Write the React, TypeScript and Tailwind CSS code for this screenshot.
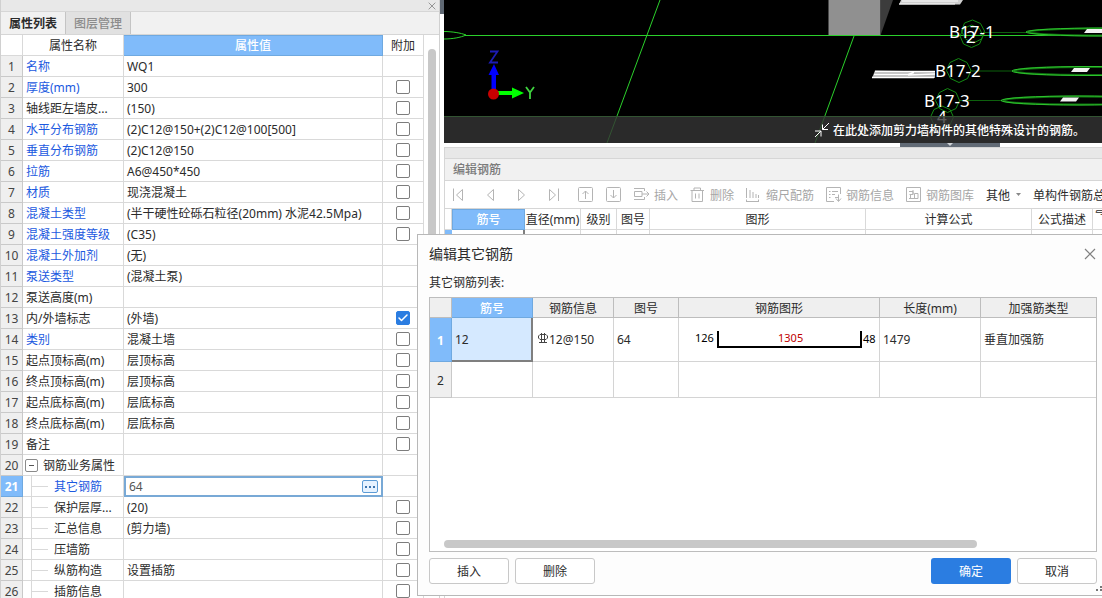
import { useState } from "react";
import type { ReactNode } from "react";
import { Check } from "lucide-react";

type PropertyRow = {
  id: number;
  name: string;
  value: string;
  common?: boolean;
  extra?: boolean;
  kind?: "group" | "child";
};

const rows: PropertyRow[] = [
  { id: 1, name: "名称", value: "WQ1", common: true },
  { id: 2, name: "厚度(mm)", value: "300", common: true, extra: false },
  { id: 3, name: "轴线距左墙皮...", value: "(150)", extra: false },
  { id: 4, name: "水平分布钢筋", value: "(2)C12@150+(2)C12@100[500]", common: true, extra: false },
  { id: 5, name: "垂直分布钢筋", value: "(2)C12@150", common: true, extra: false },
  { id: 6, name: "拉筋", value: "A6@450*450", common: true, extra: false },
  { id: 7, name: "材质", value: "现浇混凝土", common: true, extra: false },
  { id: 8, name: "混凝土类型", value: "(半干硬性砼砾石粒径(20mm) 水泥42.5Mpa)", common: true, extra: false },
  { id: 9, name: "混凝土强度等级", value: "(C35)", common: true, extra: false },
  { id: 10, name: "混凝土外加剂", value: "(无)", common: true },
  { id: 11, name: "泵送类型", value: "(混凝土泵)", common: true },
  { id: 12, name: "泵送高度(m)", value: "" },
  { id: 13, name: "内/外墙标志", value: "(外墙)", extra: true },
  { id: 14, name: "类别", value: "混凝土墙", common: true, extra: false },
  { id: 15, name: "起点顶标高(m)", value: "层顶标高", extra: false },
  { id: 16, name: "终点顶标高(m)", value: "层顶标高", extra: false },
  { id: 17, name: "起点底标高(m)", value: "层底标高", extra: false },
  { id: 18, name: "终点底标高(m)", value: "层底标高", extra: false },
  { id: 19, name: "备注", value: "", extra: false },
  { id: 20, name: "钢筋业务属性", value: "", kind: "group" },
  { id: 21, name: "其它钢筋", value: "64", common: true, kind: "child" },
  { id: 22, name: "保护层厚...", value: "(20)", extra: false, kind: "child" },
  { id: 23, name: "汇总信息", value: "(剪力墙)", extra: false, kind: "child" },
  { id: 24, name: "压墙筋", value: "", extra: false, kind: "child" },
  { id: 25, name: "纵筋构造", value: "设置插筋", extra: false, kind: "child" },
  { id: 26, name: "插筋信息", value: "", extra: false, kind: "child" },
];

const ACTIVE_ROW = 21;

function CloseIcon({ size }: { size: number }) {
  return (
    <svg width={size} height={size} viewBox="0 0 12 12" fill="none" stroke="#808080">
      <path d="M1 1L11 11M11 1L1 11" strokeWidth="1.2" />
    </svg>
  );
}

function ExtraCheckbox({ label, initial }: { label: string; initial: boolean }) {
  const [checked, setChecked] = useState(initial);

  return (
    <span className="relative flex items-center justify-center">
      <input
        type="checkbox"
        aria-label={label}
        checked={checked}
        onChange={(e) => setChecked(e.target.checked)}
        className="h-3.5 w-3.5 appearance-none rounded-xs border border-[#7d7d7d] bg-white checked:border-[#2b7de1] checked:bg-[#2b7de1]"
      />
      {checked && (
        <Check
          size={12}
          strokeWidth={3}
          className="pointer-events-none absolute text-white"
        />
      )}
    </span>
  );
}

function NameCell({ row }: { row: PropertyRow }) {
  if (row.kind === "group") {
    return (
      <div className="flex h-5 items-center gap-[5px] pl-0.5">
        <button
          type="button"
          aria-label="折叠"
          className="flex h-[13px] w-[13px] items-center justify-center rounded-xs border border-[#8a8a8a]"
        >
          <span className="h-px w-[5px] bg-[#555]" />
        </button>
        <span className="pt-0.5">{row.name}</span>
      </div>
    );
  }
  if (row.kind === "child") {
    return (
      <div className="flex h-5 items-center pl-2">
        <span className="flex h-5 w-[17px] items-center border-l border-[#d9d9d9]">
          <span className="h-px w-4 bg-[#d9d9d9]" />
        </span>
        <span className="pt-0.5 pl-1.5">{row.name}</span>
      </div>
    );
  }
  return <div className="pt-0.5 pl-[3px]">{row.name}</div>;
}

function PropertyPanel() {
  const [other, setOther] = useState("64");

  return (
    <aside className="flex w-[440px] shrink-0 flex-col border-x border-[#d0d0d0] bg-white">
      <div className="flex h-3 shrink-0 items-center justify-end border-b border-[#d6d6d6] bg-[#e8e8e8] pr-[3px]">
        <button type="button" aria-label="关闭">
          <CloseIcon size={8} />
        </button>
      </div>
      <div className="flex h-[23px] shrink-0 border-b border-[#d6d6d6] bg-[#f1f1f1]">
        <button type="button" className="w-[65px] border-r border-[#c4c4c4] pt-0.5 font-semibold">
          属性列表
        </button>
        <button
          type="button"
          className="w-[65px] border-r border-[#c4c4c4] bg-[#e1e1e1] pt-0.5 font-medium text-[#8c8c8c]"
        >
          图层管理
        </button>
      </div>
      <div className="flex min-h-0 flex-1 overflow-hidden">
        <table className="w-[423px] shrink-0 table-fixed border-separate border-spacing-0 self-start">
          <colgroup>
            <col className="w-[22px]" />
            <col className="w-[101px]" />
            <col className="w-[259px]" />
            <col className="w-[41px]" />
          </colgroup>
          <thead>
            <tr className="h-[21px]">
              <th className="border-r border-b border-[#d9d9d9] p-0" />
              <th className="border-r border-b border-[#d9d9d9] p-0 pt-0.5 font-normal">属性名称</th>
              <th className="border border-l-0 border-[#6fa9e0] bg-[#80bbfa] p-0 pt-px font-medium text-white">
                属性值
              </th>
              <th className="border-r border-b border-[#d9d9d9] p-0 pt-0.5 font-normal">附加</th>
            </tr>
          </thead>
          <tbody>
            {rows.map((row) => {
              const active = row.id === ACTIVE_ROW;
              return (
                <tr key={row.id} className="h-[21px]">
                  <td
                    className={
                      active
                        ? "border-r border-b border-[#6fa9e0] bg-[#80bbfa] p-0 pt-0.5 text-center font-bold text-white"
                        : "border-r border-b border-[#c9c9c9] bg-[#efefef] p-0 pt-0.5 text-center text-[#444]"
                    }
                  >
                    {row.id}
                  </td>
                  <td
                    className={`border-r border-b border-[#d9d9d9] p-0 whitespace-nowrap ${
                      row.common ? "text-[#1b59e0]" : ""
                    }`}
                  >
                    <NameCell row={row} />
                  </td>
                  {active ? (
                    <td className="border-2 border-[#78a9d6] p-0">
                      <div className="flex items-center pr-[3px] pl-[3px]">
                        <input
                          aria-label={row.name}
                          value={other}
                          onChange={(e) => setOther(e.target.value)}
                          className="h-4 min-w-0 flex-1 text-[#555] outline-none"
                        />
                        <button
                          type="button"
                          aria-label="更多"
                          className="flex h-[13px] w-4 items-center justify-center gap-0.5 rounded-xs border border-[#5b9bd5] bg-[#e6f2ff]"
                        >
                          <span className="h-0.5 w-0.5 bg-[#3d74ad]" />
                          <span className="h-0.5 w-0.5 bg-[#3d74ad]" />
                          <span className="h-0.5 w-0.5 bg-[#3d74ad]" />
                        </button>
                      </div>
                    </td>
                  ) : (
                    <td className="border-r border-b border-[#d9d9d9] p-0 pt-0.5 pl-[3px] whitespace-nowrap">
                      {row.value}
                    </td>
                  )}
                  <td className="border-r border-b border-[#d9d9d9] p-0">
                    {row.extra !== undefined && (
                      <ExtraCheckbox label={`附加 ${row.name}`} initial={row.extra} />
                    )}
                  </td>
                </tr>
              );
            })}
          </tbody>
        </table>
        <div className="mt-3.5 mb-1 ml-1 w-2 rounded-full bg-[#c8c8c8]" />
      </div>
    </aside>
  );
}

function ModelView() {
  return (
    <div className="relative h-[143px] shrink-0 overflow-hidden bg-black">
      <svg width="658" height="143" viewBox="444 0 658 143" fill="none" className="block max-w-none">
        <g stroke="#2bd02b">
          <path d="M444 31.5c8 0 17 1.500 22 3.500c-5 2.500-14 4-22 4" />
          <path d="M465 35.500H1102" />
          <path d="M660 0L607 143" />
          <path d="M444 116.500H1102" />
          <path d="M854 36L815 143" />
        </g>

        <path d="M491.500 89V75H488.500L494 64L499 75H496V89z" fill="#0000ff" />
        <path d="M498 91H512V87.500L524 93L512 98.500V95H498z" fill="#00ff00" />
        <circle cx="493.500" cy="94" r="5.500" fill="#c80000" />
        <path d="M490 51.500H497.500L490 62.500H498" stroke="#1c1cb4" strokeWidth="1.800" />
        <path d="M526 87L530 92.500V99M534 87L530 92.500" stroke="#3fd43f" strokeWidth="1.800" />

        <path d="M828.500 0H880.500V35H828.500z" fill="#909090" />
        <path d="M881 0H893L881 34z" fill="#3c3c3c" />
        <path d="M901 0H963L960 4.500H899z" fill="#cfcfcf" />
        <path d="M902 1H958M899 4H955" stroke="#fff" />

        <path d="M875 70.500L935 71.500V78H872z" fill="#b4b4b4" />
        <path d="M875 71.500H935M874 74.500H908L914 72.500M908 75L935 74M872 77.500H934" stroke="#fff" strokeWidth="1.500" />

        <g stroke="#138a13">
          <path d="M983 32.500H1028M970 71H1013M959 100.500H1002" strokeOpacity=".7" />
          <path d="M972.500 20l8 3.500 4 7.500-3 8-8 4-8-4-4-8 3-8z" />
          <path d="M971.500 25l8 3.500 3.500 7.500-3.500 8-8 3.500-8-3.500-3.500-8 3.500-7.500z" />
          <path d="M958.500 58.500l8.500 4 4 8-3.500 8-8.500 4-8.500-4-4-8 3.500-8z" />
          <path d="M947.500 88.500l8.500 4 3.500 8-3.500 8-8.500 4-8-4-4-8 4-8z" />
          <path d="M942 106l8 3.500 3.500 7.500-3.500 8-8 3.500-8-3.500-3.500-8 3.500-7.500z" />
        </g>
        <g fill="#000" stroke="#0f6e0f" strokeWidth="2">
          <ellipse cx="1104" cy="32" rx="76" ry="3.500" />
          <ellipse cx="1090" cy="71" rx="76" ry="4" />
          <ellipse cx="1079" cy="100.500" rx="76" ry="4" />
        </g>
        <g stroke="#2fc42f">
          <ellipse cx="1104" cy="32" rx="78" ry="4" />
          <ellipse cx="1090" cy="71" rx="78" ry="4.500" />
          <ellipse cx="1079" cy="100.500" rx="78" ry="4.500" />
        </g>
        <g fill="#f2f2f2">
          <path d="M1087 29H1102V33H1084z" />
          <path d="M1074 68H1090L1087 72H1071z" />
          <path d="M1063 97.500H1079L1076 101.500H1060z" />
        </g>
        <g fill="#fff" fontSize="17" fontFamily="'Noto Sans', sans-serif">
          <text x="949" y="38">B17-1</text>
          <text x="966" y="43">2</text>
          <text x="935" y="77">B17-2</text>
          <text x="924" y="107">B17-3</text>
          <text x="937" y="123">4</text>
        </g>
      </svg>
      <div className="absolute inset-x-0 bottom-0 flex h-[27px] items-center justify-end gap-[3px] bg-[#353535]/80 pt-0.5 pr-[17px] font-medium text-white">
        <svg width="16" height="16" viewBox="0 0 16 16" fill="none" stroke="#fff">
          <path d="M15 0L8.500 6.500M8.500 1.500V6.500H14M1 14L7 8M1 8H7V13.500" />
        </svg>
        在此处添加剪力墙构件的其他特殊设计的钢筋。
      </div>
    </div>
  );
}

function Icon({ children }: { children: ReactNode }) {
  return (
    <svg
      width="16"
      height="16"
      viewBox="0 0 16 16"
      fill="none"
      stroke="#b4b4b4"
      className="shrink-0"
    >
      {children}
    </svg>
  );
}

function ToolButton({ label, children }: { label: string; children: ReactNode }) {
  return (
    <button type="button" className="flex shrink-0 items-center gap-1 text-[#a6a6a6]">
      <Icon>{children}</Icon>
      <span className="pt-0.5">{label}</span>
    </button>
  );
}

function IconButton({ label, children }: { label: string; children: ReactNode }) {
  return (
    <button type="button" aria-label={label} className="shrink-0">
      <Icon>{children}</Icon>
    </button>
  );
}

function RebarToolbar() {
  return (
    <div className="flex h-7 shrink-0 items-center gap-3 overflow-hidden border-b border-[#d6d6d6] pl-[5px] whitespace-nowrap">
      <div className="flex gap-4">
        <IconButton label="首条">
          <path d="M3.500 1.500V14M12.500 2.500V13.500L6.500 8z" />
        </IconButton>
        <IconButton label="上一条">
          <path d="M11.500 2.500V13.500L5.500 8z" />
        </IconButton>
        <IconButton label="下一条">
          <path d="M4.500 2.500V13.500L10.500 8z" />
        </IconButton>
        <IconButton label="末条">
          <path d="M12.500 1.500V14M3.500 2.500V13.500L9.500 8z" />
        </IconButton>
        <IconButton label="上移">
          <rect x=".5" y=".5" width="14" height="14" rx="1" />
          <path d="M7.500 12V4M4.500 7L7.500 4L10.500 7" />
        </IconButton>
      </div>
      <IconButton label="下移">
        <rect x=".5" y=".5" width="14" height="14" rx="1" />
        <path d="M7.500 3V11M4.500 8L7.500 11L10.500 8" />
      </IconButton>
      <ToolButton label="插入">
        <path d="M0 1.500H10.500V4M0 12.500H10.500V10M.5 4.500H8V9.500H.5zM8 7H15M12.500 4.500L15 7L12.500 9.500" />
      </ToolButton>
      <ToolButton label="删除">
        <path d="M.5 3.500H14M4 3.500V1H10.500V3.500M2 3.500V14.500H12.500V3.500M5.500 6.500V11.500M9 6.500V11.500" />
      </ToolButton>
      <ToolButton label="缩尺配筋">
        <path d="M.5 1V11M4 3V11M7 5V11M10 7V11M12.500 8V11M0 14.500H13M.5 12.500V15M12.500 12.500V15" />
      </ToolButton>
      <ToolButton label="钢筋信息">
        <path d="M14.500 7V.5H.5V14.500H8M3 4.500H4.500M6 4.500H12M3 7.500H4.500M6 7.500H9M3 10.500H4.500M12.500 7.500V14M10 11.500L12.500 14.500L15 11.500M9 10.500H12" />
      </ToolButton>
      <ToolButton label="钢筋图库">
        <path d="M.5 .5H14.500V14.500H.5zM3 4.500H7V7.500H3.500M7 3V7.500M3 11.500H12V6.500H8.500V11.500M4.500 7.500V11.500" />
      </ToolButton>
      <button type="button" className="flex shrink-0 items-center gap-1.5">
        <span className="pt-0.5">其他</span>
        <svg width="5" height="3" viewBox="0 0 5 3">
          <path d="M0 0H5L2.500 3z" fill="#888" />
        </svg>
      </button>
      <button type="button" className="shrink-0 pt-0.5">
        单构件钢筋总重
      </button>
    </div>
  );
}

function RebarPanel() {
  const head = "border-r border-b border-[#d9d9d9] p-0 pt-0.5 font-normal whitespace-nowrap";

  return (
    <section className="flex min-h-0 flex-1 flex-col border-t border-l border-[#d6d6d6] bg-white">
      <div className="h-[11px] shrink-0 border-b border-[#d6d6d6] bg-[#e8e8e8]" />
      <h2 className="flex h-[22px] shrink-0 items-center border-b border-[#d6d6d6] bg-[#f1f1f1] pt-px pl-2 font-medium text-[#7a7a7a]">
        编辑钢筋
      </h2>
      <RebarToolbar />
      <table className="w-full table-fixed border-separate border-spacing-0">
        <colgroup>
          <col className="w-[7px]" />
          <col className="w-[73px]" />
          <col className="w-14" />
          <col className="w-9" />
          <col className="w-[33px]" />
          <col className="w-[216px]" />
          <col className="w-[166px]" />
          <col className="w-[61px]" />
          <col />
        </colgroup>
        <thead>
          <tr className="h-[21px]">
            <th className={head} />
            <th className="border border-[#6fa9e0] bg-[#80bbfa] p-0 pt-px font-medium text-white">筋号</th>
            <th className={head}>直径(mm)</th>
            <th className={head}>级别</th>
            <th className={head}>图号</th>
            <th className={head}>图形</th>
            <th className={head}>计算公式</th>
            <th className={head}>公式描述</th>
            <th className="border-b border-[#d9d9d9] p-0 text-left font-normal">
              {/* narrow column: only the foot of the wrapped title shows */}
              <div className="h-5 overflow-hidden pl-px leading-[2px]">弯</div>
            </th>
          </tr>
        </thead>
        <tbody>
          <tr className="h-[21px]">
            <td className="bg-[#80bbfa] p-0" />
            <td className="border-r-2 border-[#7f7f7f] p-0" />
            <td className={head} />
            <td className={head} />
            <td className={head} />
            <td className={head} />
            <td className={head} />
            <td className={head} />
            <td className="border-b border-[#d9d9d9] p-0" />
          </tr>
        </tbody>
      </table>
    </section>
  );
}

function BarShape() {
  return (
    <svg width="200" height="43" viewBox="0 0 200 43" className="block">
      <path d="M39 13V29H182V13" fill="none" stroke="#000" strokeWidth="2" />
      <g fontSize="11" fontFamily="'Noto Sans', sans-serif">
        <text x="16" y="24">126</text>
        <text x="99" y="24" fill="#c00000">1305</text>
        <text x="184" y="25">48</text>
      </g>
    </svg>
  );
}

function OtherRebarDialog() {
  const head = "border-r border-b border-[#bdbdbd] bg-[#efefef] p-0 pt-0.5 font-normal last:border-r-0";
  const cell = "border-r border-b border-[#d4d4d4] p-0 pl-[3px] last:border-r-0";

  return (
    <div
      role="dialog"
      aria-labelledby="dialog-title"
      className="absolute top-[234px] right-0 bottom-0.5 left-[417px] flex flex-col border-y border-l border-[#b8b8b8] bg-[#fdfdfd] pr-[5px] pb-[11px] pl-[11px]"
    >
      <div className="flex h-[38px] shrink-0 items-center justify-between">
        <h2 id="dialog-title" className="text-sm">
          编辑其它钢筋
        </h2>
        <button type="button" aria-label="关闭" className="pr-px">
          <CloseIcon size={12} />
        </button>
      </div>
      <p className="mb-1 h-5 shrink-0 leading-5">其它钢筋列表:</p>
      <div className="flex min-h-0 flex-1 flex-col justify-between border border-[#bdbdbd] bg-white">
        <table className="w-full table-fixed border-separate border-spacing-0">
          <colgroup>
            <col className="w-[22px]" />
            <col className="w-[81px]" />
            <col className="w-[81px]" />
            <col className="w-[65px]" />
            <col className="w-[201px]" />
            <col className="w-[101px]" />
            <col />
          </colgroup>
          <thead>
            <tr className="h-5">
              <th className={head} />
              <th className="border-r border-b border-[#6fa9e0] bg-[#80bbfa] p-0 pt-0.5 font-medium text-white">
                筋号
              </th>
              <th className={head}>钢筋信息</th>
              <th className={head}>图号</th>
              <th className={head}>钢筋图形</th>
              <th className={head}>长度(mm)</th>
              <th className={head}>加强筋类型</th>
            </tr>
          </thead>
          <tbody>
            <tr className="h-11">
              <td className="border-r border-b border-[#6fa9e0] bg-[#80bbfa] p-0 pt-0.5 text-center font-bold text-white">
                1
              </td>
              <td className="border-r-2 border-b-2 border-[#7f7f7f] bg-[#d5e9ff] p-0 pt-0.5 pl-[3px]">
                12
              </td>
              <td className={cell}>
                <div className="flex items-center gap-px pl-0.5">
                  <svg width="10" height="16" viewBox="0 0 10 16" fill="none" stroke="#444">
                    <path d="M1 10.500H9M3.500 1V10.500M6.500 1V10.500M2 2.500H8L9.500 4V6L8 7.500H2L.5 6V4z" />
                  </svg>
                  12@150
                </div>
              </td>
              <td className={cell}>64</td>
              <td className="border-r border-b border-[#d4d4d4] p-0">
                <BarShape />
              </td>
              <td className={cell}>1479</td>
              <td className={cell}>垂直加强筋</td>
            </tr>
            <tr className="h-9">
              <td className="border-r border-b border-[#c9c9c9] bg-[#efefef] p-0 pt-0.5 text-center">2</td>
              <td className={cell} />
              <td className={cell} />
              <td className={cell} />
              <td className={cell} />
              <td className={cell} />
              <td className={cell} />
            </tr>
          </tbody>
        </table>
        <div className="mb-[3px] ml-3.5 h-2 w-4/5 rounded-full bg-[#c8c8c8]" />
      </div>
      <div className="mt-1.5 flex h-[26px] shrink-0 gap-1.5">
        <button type="button" className="w-20 rounded-[3px] border border-[#c8c8c8] bg-white pt-0.5">
          插入
        </button>
        <button type="button" className="w-20 rounded-[3px] border border-[#c8c8c8] bg-white pt-0.5">
          删除
        </button>
        <button type="button" className="ml-auto w-20 rounded-[3px] bg-[#2b7de1] pt-0.5 text-white">
          确定
        </button>
        <button type="button" className="w-20 rounded-[3px] border border-[#c8c8c8] bg-white pt-0.5">
          取消
        </button>
      </div>
      <svg width="6" height="6" viewBox="0 0 6 6" className="absolute right-0 bottom-[3px]" fill="#777">
        <path d="M4 0h2v2H4zM0 3h2v2H0zM4 3h2v2H4z" />
      </svg>
    </div>
  );
}

export default function App() {
  return (
    <div className="relative flex h-screen overflow-hidden bg-white font-['Noto_Sans','Noto_Sans_CJK_SC',sans-serif] text-xs text-[#2b2b2b]">
      <PropertyPanel />
      <div className="w-1 shrink-0">
        <div className="h-3.5 bg-[#5f6873]" />
      </div>
      <main className="flex min-w-0 flex-1 flex-col">
        <ModelView />
        <div className="h-1 shrink-0">
          <div className="ml-[456px] flex h-1 w-[100px] justify-center bg-[#626b76]">
            <svg width="6" height="3" viewBox="0 0 6 3">
              <path d="M0 0H6L3 3z" fill="#d0d4d8" />
            </svg>
          </div>
        </div>
        <RebarPanel />
      </main>
      <OtherRebarDialog />
    </div>
  );
}
